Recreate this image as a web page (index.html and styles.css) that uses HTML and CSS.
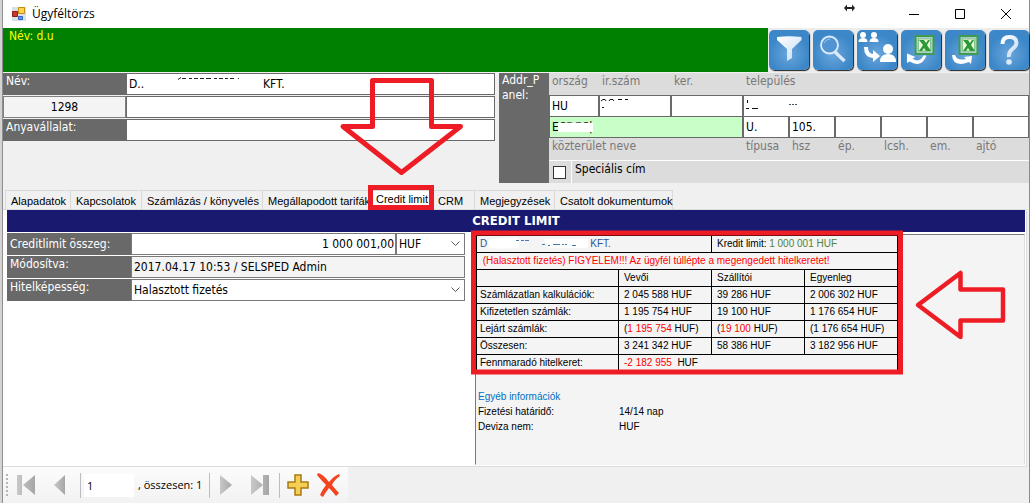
FILE: index.html
```html
<!DOCTYPE html>
<html lang="hu">
<head>
<meta charset="utf-8">
<title>Ügyféltörzs</title>
<link rel="stylesheet" href="styles.css">
</head>
<body>
<svg class="defs" aria-hidden="true">
  <defs>
    <radialGradient id="tile" cy=".6"><stop offset="0" stop-color="#6aa6dc"/><stop offset="1" stop-color="#3c87c8"/></radialGradient>
    <linearGradient id="ice" x2="1" y2="1"><stop offset="0" stop-color="#fff"/><stop offset="1" stop-color="#c3dcf3"/></linearGradient>
    <linearGradient id="steel" x2="1"><stop offset="0" stop-color="#c8c8c8"/><stop offset="1" stop-color="#a6a6a6"/></linearGradient>
    <g id="sheet">
      <rect x="14.500" y="6" width="18" height="18" fill="#a9cfc4" stroke="#3f9b50" stroke-width="2"/>
      <rect x="17.500" y="9" width="12" height="12" fill="#eef8dc" stroke="#86c58d"/>
      <path d="M18 10h5l2 3 2-3h2l-3 5 4 6h-5l-2-3-2 3h-3l4-6z" fill="#2d9a3a"/>
    </g>
  </defs>
</svg>
<div class="window">
  <header class="titlebar">
    <svg class="app-icon" width="14" height="14" viewBox="0 0 14 14"><path d="M0 0h14v14H0z" fill="#dbe0e6"/><path d="M.5 4.500h5v5h-5z" fill="#c83a2c" stroke="#8f1d18"/><path d="M6.500.5h6v6h-6z" fill="#ffd34d" stroke="#c18c10"/><path d="M6.500 9.500h4v3h-4z" fill="#5c9bf0" stroke="#2b60bd"/></svg>
    <h1>Ügyféltörzs</h1>
    <svg class="resize" width="11" height="8" viewBox="0 0 11 8"><path d="M0 4l3-3.500V3h5V.5L11 4 8 7.500V5H3v2.500z" fill="#222"/></svg>
    <button class="win-btn" aria-label="Kis méret"><svg width="10" height="10"><path d="M0 5.500h10" stroke="#000"/></svg></button>
    <button class="win-btn" aria-label="Teljes méret"><svg width="10" height="10"><path d="M.5.5h9v9h-9z" fill="none" stroke="#000"/></svg></button>
    <button class="win-btn" aria-label="Bezárás"><svg width="10" height="10"><path d="M0 0l10 10M10 0L0 10" stroke="#000"/></svg></button>
  </header>

  <div class="banner">
    <div class="banner-name">Név: d.u</div>
    <div class="tiles">
      <button aria-label="Szűrő"><svg viewBox="0 0 40 40"><rect width="40" height="40" rx="5" fill="url(#tile)"/><path d="M8 7q12-1.500 24.500 0v3L23 19v9l-5 3V19L8 10z" fill="url(#ice)"/></svg></button>
      <button aria-label="Keresés"><svg viewBox="0 0 40 40"><rect width="40" height="40" rx="5" fill="url(#tile)"/><circle cx="16.500" cy="15" r="8.500" fill="#5294d2" stroke="#dceafa" stroke-width="1.800"/><path d="M11 13q2-4 6-4" stroke="#9ec6ea" fill="none"/><path d="M22 22l9.500 9" stroke="#dcebfa" stroke-width="3.200"/></svg></button>
      <button aria-label="Ügyfelek"><svg viewBox="0 0 40 40"><rect width="40" height="40" rx="5" fill="url(#tile)"/><g fill="#fff"><circle cx="6" cy="5" r="3"/><path d="M1.500 12q0-4 4.500-4t4.500 4z"/><circle cx="17" cy="5" r="3"/><path d="M12.500 12q0-4 4.500-4t4.500 4z"/><circle cx="31" cy="19" r="5"/><path d="M23 32q0-8 8-8t8 8z"/><path d="M7 17h4q0 7 5 7v-4l7 6-7 6v-4Q7 28 7 17z"/></g></svg></button>
      <button aria-label="Excel frissítés"><svg viewBox="0 0 40 40"><rect width="40" height="40" rx="5" fill="url(#tile)"/><use href="#sheet"/><path d="M6 23.500l8.500 3.500-3 1.500q7 5 11-3h3q-5 13-17 6L6 33z" fill="#fff"/></svg></button>
      <button aria-label="Excel export"><svg viewBox="0 0 40 40"><rect width="40" height="40" rx="5" fill="url(#tile)"/><use href="#sheet"/><path d="M7 25h3q2 6 11 4l-2-2 8-1-1 8-2-2q-16 6-17-7z" fill="#fff"/></svg></button>
      <button aria-label="Súgó"><svg viewBox="0 0 40 40"><rect width="40" height="40" rx="5" fill="url(#tile)"/><path d="M13.500 14q0-7 7-7t7 6q0 3-4 6t-3.500 8" fill="none" stroke="url(#ice)" stroke-width="4"/><circle cx="20" cy="32" r="2.800" fill="#dcebfa"/></svg></button>
    </div>
  </div>

  <section class="forms">
    <div class="party">
      <label for="nev">Név:</label>
      <div class="masked">
        <input id="nev" value="D..">
        <svg width="185" height="20" viewBox="0 0 185 20"><path d="M52 6.500l3-2m1 1h4m3 0h3m2 0h4m2 0h4m2 0h5m3 0h3m2 0h4m2 0h3m2 0h4m4 0h1" stroke="#222" fill="none"/></svg>
        <span>KFT.</span>
      </div>
      <button class="code">1298</button><input aria-label="Név 2">
      <label for="anya">Anyavállalat:</label><input id="anya">
    </div>
    <fieldset class="address">
      <legend>Addr_P<br>anel:</legend>
      <div class="addr-grid">
        <label for="orszag">ország</label><label for="irsz">ir.szám</label><label for="ker">ker.</label><label class="town" for="telep">település</label>
        <input id="orszag" value="HU">
        <div class="masked"><input id="irsz"><svg width="40" height="20"><path d="M2 6l2-1.500h2L7 6M10 6l1-1.500h3l1 1.500M19 4.500h4m3 0h3M3 12.500h2" stroke="#111" fill="none"/></svg></div>
        <input id="ker">
        <div class="masked town"><input id="telep"><svg width="60" height="20"><path d="M4.500 5v3M3 13.500h3m3 0h6" stroke="#111"/><path d="M46 9.500h8" stroke="#456" stroke-dasharray="2 1"/></svg></div>
        <div class="masked street"><input id="utca" value="ECDEC|"><svg width="50" height="20"><path d="M9 7q15-1 35 0v9H9z" fill="#fff"/></svg></div>
        <input id="tipus" value="U."><input id="hsz" value="105."><input id="ep"><input id="lcsh"><input id="em"><input id="ajto">
        <label class="street" for="utca">közterület neve</label><label for="tipus">típusa</label><label for="hsz">hsz</label><label for="ep">ép.</label><label for="lcsh">lcsh.</label><label for="em">em.</label><label for="ajto">ajtó</label>
      </div>
      <div class="special"><input type="checkbox" id="spec"><label for="spec">Speciális cím</label></div>
    </fieldset>
  </section>

  <nav class="tabs">
    <button>Alapadatok</button><button>Kapcsolatok</button><button>Számlázás / könyvelés</button><button>Megállapodott tarifák</button><button class="active">Credit limit</button><button>CRM</button><button>Megjegyzések</button><button>Csatolt dokumentumok</button>
  </nav>

  <main class="page">
    <h2>CREDIT LIMIT</h2>
    <div class="columns">
      <div class="credit">
        <label for="osszeg">Creditlimit összeg:</label>
        <div class="amount"><input id="osszeg" value="1 000 001,00"><select aria-label="Deviza"><option>HUF</option></select></div>
        <label for="mod">Módosítva:</label><input id="mod" class="readonly" readonly value="2017.04.17 10:53 / SELSPED Admin">
        <label for="hitel">Hitelképesség:</label><select id="hitel"><option>Halasztott fizetés</option></select>
      </div>
      <div class="report">
        <table>
          <colgroup><col class="c-name"><col class="c-val"><col class="c-val"><col class="c-val"></colgroup>
          <tr><td colspan="2" class="client">D<svg width="103" height="14" viewBox="0 0 103 14"><path d="M1 3Q20 0 32 1v10q-15 1-30 0zM57 2h44v9H62z" fill="#fff"/><path d="M29 3.500h3m2 0h3m1 0h4M55 7.500h3m3 1h2m3-1h7m2 0h2m1 0h2m5 1h4" stroke="#4a78ac"/></svg>KFT.</td><td colspan="2">Kredit limit: <span class="ok">1 000 001 HUF</span></td></tr>
          <tr><td colspan="4" class="neg">&nbsp;(Halasztott fizetés) FIGYELEM!!! Az ügyfél túllépte a megengedett hitelkeretet!</td></tr>
          <tr><td></td><td>Vevői</td><td>Szállítói</td><td>Egyenleg</td></tr>
          <tr><td>Számlázatlan kalkulációk:</td><td>2 045 588 HUF</td><td>39 286 HUF</td><td>2 006 302 HUF</td></tr>
          <tr><td>Kifizetetlen számlák:</td><td>1 195 754 HUF</td><td>19 100 HUF</td><td>1 176 654 HUF</td></tr>
          <tr><td>Lejárt számlák:</td><td>(<span class="neg">1 195 754</span> HUF)</td><td>(<span class="neg">19 100</span> HUF)</td><td>(1 176 654 HUF)</td></tr>
          <tr><td>Összesen:</td><td>3 241 342 HUF</td><td>58 386 HUF</td><td>3 182 956 HUF</td></tr>
          <tr><td>Fennmaradó hitelkeret:</td><td colspan="3"><span class="neg">-2 182 955</span>&nbsp; HUF</td></tr>
        </table>
        <h3>Egyéb információk</h3>
        <dl><dt>Fizetési határidő:</dt><dd>14/14 nap</dd><dt>Deviza nem:</dt><dd>HUF</dd></dl>
      </div>
    </div>
  </main>

  <footer class="navigator">
    <div class="strip">
      <span class="grip"></span>
      <button aria-label="Első"><svg width="18" height="22"><path d="M0 1h5v20H0zM18 1v20L6 11z" fill="url(#steel)"/></svg></button>
      <button aria-label="Előző"><svg width="12" height="22"><path d="M11 1v20L0 11z" fill="url(#steel)"/></svg></button>
      <span class="sep"></span>
      <input aria-label="Sorszám" value="1"><span class="total">, összesen: 1</span>
      <span class="sep"></span>
      <button aria-label="Következő"><svg width="12" height="22"><path d="M0 1v20l12-10z" fill="url(#steel)"/></svg></button>
      <button aria-label="Utolsó"><svg width="18" height="22"><path d="M0 1v20l12-10zM12 1h6v20h-6z" fill="url(#steel)"/></svg></button>
      <span class="sep"></span>
      <button aria-label="Új"><svg width="22" height="22"><path d="M8 1h6v7h7v6h-7v7H8v-7H1V8h7z" fill="#f5cf55" stroke="#a87a12" stroke-width="1.500"/></svg></button>
      <button aria-label="Törlés"><svg width="24" height="24"><path d="M1 0Q6 1 12 9 17 3 22 1l1 2q-6 4-8 9 4 5 7 8l-3 3q-4-5-7-8-4 5-6 9l-3-2q2-5 6-10Q4 7 0 2z" fill="#f2441f"/></svg></button>
    </div>
  </footer>

  <svg class="marks" width="1030" height="503" viewBox="0 0 1030 503" fill="none" stroke="#ee1c24" aria-hidden="true">
    <path d="M372.500 80.500H431.500V126.500H460.500L401.500 172.500 343 126.500H372.500z" stroke-width="5" stroke-linejoin="round"/>
    <rect x="370.500" y="187.500" width="61" height="20" stroke-width="5"/>
    <rect x="473.500" y="233" width="427" height="139" stroke-width="5"/>
    <path d="M1003 289.500V320.500H960.500V337L918 305 960.500 273V289.500z" stroke-width="4.500" stroke-linejoin="round"/>
  </svg>
</div>
</body>
</html>
```
FILE: styles.css
```css
* { box-sizing: border-box; }
body { margin: 0; background: #f0f0f0; font: 12px/16px "DejaVu Sans Condensed", "DejaVu Sans", sans-serif; color: #000; }
h1, h2, h3, dl, dd, fieldset, legend { margin: 0; padding: 0; border: 0; font-weight: normal; }
button, input, select { font: inherit; color: inherit; margin: 0; padding: 0; border: 0; border-radius: 0; min-width: 0; background: none; }
svg { display: block; }
.defs { position: absolute; width: 0; height: 0; }

.window { position: relative; display: flex; flex-direction: column; min-height: 100vh; padding-left: 3px; border-right: 1px solid #8c8c8c; background: linear-gradient(90deg, #d5d2d3 0 2px, #8f8f8f 2px 3px, #f0f0f0 3px); }

.titlebar { display: flex; align-items: center; height: 28px; padding-left: 9px; background: #fff; }
.titlebar h1 { flex: 1; margin-left: 6px; font: 12px/16px "Open Sans", sans-serif; }
.app-icon { flex: none; }
.resize { align-self: flex-start; margin: 4px 36px 0 0; }
.win-btn { display: grid; place-items: center; width: 46px; height: 24px; }

.banner { display: flex; height: 44px; }
.banner-name { flex: 1; padding: 0 6px; background: #008000; color: #ff0; }
.tiles { display: flex; gap: 4px; padding: 2px 0 2px 1px; background: #ececec; }
.tiles button { width: 40px; height: 40px; border-radius: 5px; box-shadow: 1px 1px 1px 0 #222; }
.tiles svg { width: 40px; height: 40px; }

.forms { display: grid; grid-template-columns: 492fr 530fr; gap: 4px; padding-top: 1px; height: 118px; }
.forms input:not([type=checkbox]) { width: 100%; height: 22px; border: 1px solid #696969; background: #fff; padding: 0 2px; }
.party { display: grid; grid-template-columns: 123px 1fr; grid-auto-rows: 22px; row-gap: 1px; align-content: start; }
.party label, .credit label { background: #696969; color: #fff; padding: 0 3px; }
.code { border: 1px solid #808080; background: #f4f4f4; }
.masked { position: relative; }
.masked svg, .masked span { position: absolute; top: 0; left: 0; }
.masked span { left: 137px; top: 3px; }
.address { display: grid; grid-template-columns: 50px 1fr; grid-template-rows: 88px 22px; background: #dcdcdc; align-self: start; }
.address legend { grid-row: 1 / 3; float: left; width: 50px; height: 110px; padding-left: 3px; line-height: 15px; background: #696969; color: #fff; }
.addr-grid { grid-column: 2; display: grid; grid-template-columns: 50fr 72fr 72fr repeat(5, 46fr) 56fr; grid-template-rows: 22px 21px 22px 22px; border-bottom: 1px solid #fff; }
.addr-grid label { padding-left: 3px; color: #787878; }
.town { grid-column: 4 / 10; }
.street { grid-column: 1 / 4; }
.forms .street input { background: #c8ffc8; }
.special { grid-column: 2; display: flex; }
.special input { appearance: none; width: 13px; height: 13px; margin: 5px 5px 0 4px; border: 1px solid #333; background: #fff; }
.special label { padding-left: 3px; border-left: 1px solid #fff; }

.tabs { display: grid; grid-template-columns: 66px 71px 121px 108px 62px 42px 80px 118px; height: 19px; padding-left: 2px; font: 11px/16px "Liberation Sans", Arial, sans-serif; }
.tabs button { text-align: left; white-space: nowrap; padding-left: 5px; border: 1px solid #d9d9d9; border-left-width: 0; border-bottom: 0; }
.tabs button:first-child { border-left-width: 1px; }
.tabs .active { background: #fff; padding: 0 0 4px 5px; }

.page { flex: 1; display: flex; flex-direction: column; margin-right: 2px; border: 1px solid #dcdcdc; border-left: 0; padding: 0 1px 1px 4px; background: #fff; }
.page h2 { height: 22px; background: #191970; color: #fff; text-align: center; font-size: 13px; line-height: 22px; font-weight: bold; }
.columns { flex: 1; display: grid; grid-template-columns: 458fr 550fr; column-gap: 10px; }
.credit { display: grid; grid-template-columns: 124px 1fr; grid-auto-rows: 22px; row-gap: 1px; align-content: start; padding-top: 1px; }
.credit > label:first-child { padding-top: 3px; }
.credit input, .credit select { width: 100%; height: 22px; border: 1px solid #7a7a7a; background: #fff; padding: 0 2px; }
.credit select { appearance: none; background: #fff url("data:image/svg+xml,%3Csvg xmlns='http://www.w3.org/2000/svg' width='9' height='6'%3E%3Cpath d='M.5.5l4 4 4-4' fill='none' stroke='%23555'/%3E%3C/svg%3E") no-repeat right 4px center; }
.credit .readonly { background: #f4f4f4; }
.amount { display: grid; grid-template-columns: 265fr 69fr; }
.amount input { text-align: right; padding-right: 1px; }

.report { margin-top: 2px; border: 1px solid #7a7a7a; border-right-color: #ddd; border-bottom-color: #f4f4f4; background: #f4f4f4; font: 10px/15px "Liberation Sans", Arial, sans-serif; }
.report table { width: 77%; border-collapse: collapse; table-layout: fixed; }
.report td { height: 17px; padding: 0 5px; border: 1px solid #000; line-height: 16px; white-space: nowrap; }
.report td:first-child { padding-left: 3px; }
.c-name { width: 142px; }
.client { color: #2f5597; }
.client svg { display: inline-block; vertical-align: middle; }
.neg, .report td.neg { color: #f00; }
.ok { color: #548235; }
.report h3 { margin-top: 17px; padding-left: 2px; font-size: 10px; line-height: 15px; color: #0070c0; }
.report dl { display: grid; grid-template-columns: 141px 1fr; padding-left: 2px; }

.navigator { height: 36px; }
.strip { display: flex; align-items: center; width: 345px; height: 36px; background: linear-gradient(#fcfcfc, #f2f2f2); font: 11px/16px "Open Sans", sans-serif; }
.strip button, .strip span { flex: none; }
.grip { width: 2px; height: 22px; margin: 0 9px 0 3px; background: repeating-linear-gradient(#b5b5b5 0 2px, transparent 2px 4px); }
.strip button + button { margin-left: 19px; }
.sep { width: 1px; height: 25px; margin: 0 3px 0 14px; background: #bdbdbd; }
.strip input { width: 50px; height: 23px; padding: 0 3px; background: #fff; }
.total { width: 66px; margin-left: 4px; white-space: nowrap; }
.total + .sep { margin: 0 10px 0 5px; }
.sep:nth-last-child(3) { margin: 0 7px 0 10px; }
.strip button:last-child { margin-left: 8px; }

.marks { position: absolute; left: 0; top: 0; pointer-events: none; }
```
